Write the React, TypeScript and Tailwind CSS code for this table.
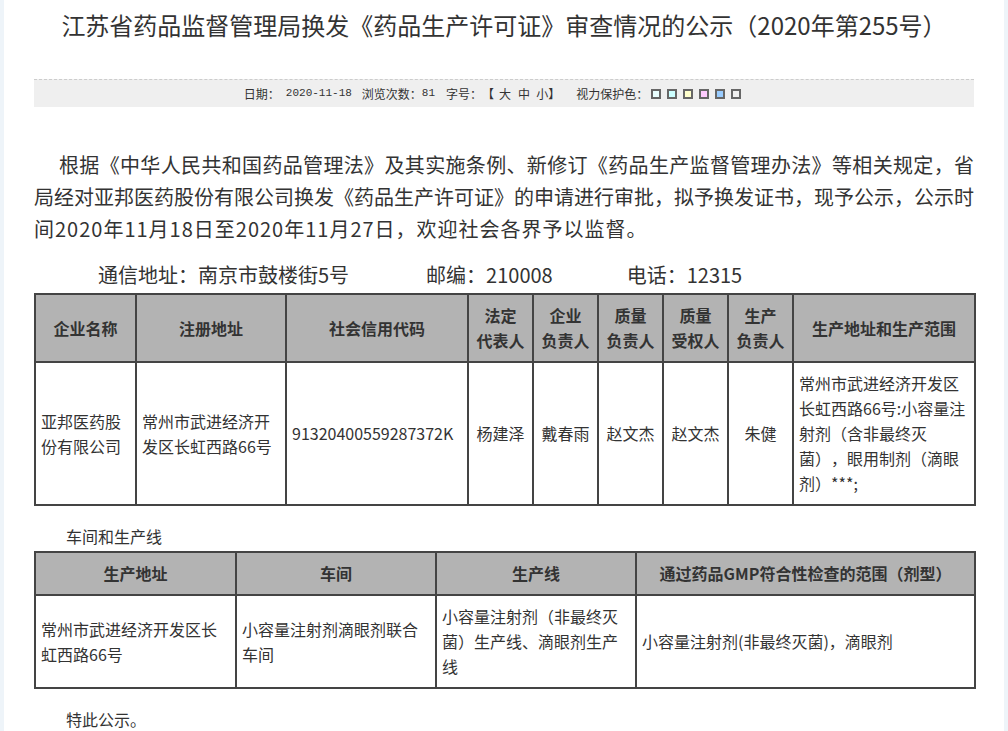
import React from 'react';

const swatches = ['bg-[#eaffff]', 'bg-[#ccffff]', 'bg-[#ffffcc]', 'bg-[#ffccff]', 'bg-[#99ccff]', 'bg-[#efefef]'];

const introLines = [
  '根据《中华人民共和国药品管理法》及其实施条例、新修订《药品生产监督管理办法》等相关规定，省',
  '局经对亚邦医药股份有限公司换发《药品生产许可证》的申请进行审批，拟予换发证书，现予公示，公示时',
];

const mainCols: { head: string[]; width: string; align: string }[] = [
  { head: ['企业名称'], width: 'w-[101px]', align: 'text-left' },
  { head: ['注册地址'], width: 'w-[150px]', align: 'text-left' },
  { head: ['社会信用代码'], width: 'w-[182px]', align: 'text-left' },
  { head: ['法定', '代表人'], width: 'w-[65px]', align: 'text-center' },
  { head: ['企业', '负责人'], width: 'w-[65px]', align: 'text-center' },
  { head: ['质量', '负责人'], width: 'w-[65px]', align: 'text-center' },
  { head: ['质量', '受权人'], width: 'w-[65px]', align: 'text-center' },
  { head: ['生产', '负责人'], width: 'w-[65px]', align: 'text-center' },
  { head: ['生产地址和生产范围'], width: 'w-[182px]', align: 'text-left' },
];

const mainRow = [
  '亚邦医药股份有限公司',
  '常州市武进经济开发区长虹西路66号',
  '91320400559287372K',
  '杨建泽',
  '戴春雨',
  '赵文杰',
  '赵文杰',
  '朱健',
  '常州市武进经济开发区长虹西路66号:小容量注射剂（含非最终灭菌），眼用制剂（滴眼剂）***;',
];

const lineCols = [
  { head: '生产地址', width: 'w-[201px]' },
  { head: '车间', width: 'w-[200px]' },
  { head: '生产线', width: 'w-[200px]' },
  { head: '通过药品GMP符合性检查的范围（剂型）', width: 'w-[339px]' },
];

const lineRow = [
  '常州市武进经济开发区长虹西路66号',
  '小容量注射剂滴眼剂联合车间',
  '小容量注射剂（非最终灭菌）生产线、滴眼剂生产线',
  '小容量注射剂(非最终灭菌)，滴眼剂',
];

const th = 'border-2 border-[#444] bg-[#b3b3b3] px-[5px] py-[8px] text-[16px] leading-[25px] font-bold text-[#333] text-center align-middle';
const td = 'border-2 border-[#444] bg-white px-[5px] py-[8px] text-[16px] leading-[25px] text-[#333] align-middle';

export default function App() {
  return (
    <div className="min-h-screen bg-[#eef4f9] font-['Noto_Sans_CJK_SC',sans-serif] text-[#333] [text-spacing-trim:space-all]">
      <div className="mx-auto w-[1000px] bg-white px-[30px] pb-[20px] pt-[10px]">
        <h1 className="text-center text-[24px] leading-[30px] font-normal text-[#333]">
          江苏省药品监督管理局换发《药品生产许可证》审查情况的公示（2020年第255号）
        </h1>

        {/* info bar */}
        <div className="mt-[39px] flex h-[28px] items-center justify-center border-t border-dashed border-[#ccc] bg-[#efefef] pr-[23px] text-[12px] text-[#333]">
          <span>日期：</span>
          <span className="ml-[6px] font-['Liberation_Mono',monospace] text-[11px]">2020-11-18</span>
          <span className="ml-[10px]">浏览次数：</span>
          <span className="font-['Liberation_Mono',monospace] text-[11px]">81</span>
          <span className="ml-[11px]">字号：</span>
          <span>【</span>
          <span className="ml-[5px]">大</span>
          <span className="ml-[7px]">中</span>
          <span className="ml-[6px]">小</span>
          <span>】</span>
          <span className="ml-[16px]">视力保护色：</span>
          <span className="ml-[3px] flex gap-[6px]">
            {swatches.map((s) => (
              <span key={s} className={`block h-[10px] w-[10px] border-2 border-[#666] ${s}`} />
            ))}
          </span>
        </div>

        {/* intro */}
        <div className="mt-[42px] text-[20px] leading-[32px] text-[#333]">
          {introLines.map((l, i) => (
            <p
              key={i}
              className={`whitespace-nowrap text-justify [text-align-last:justify] ${i === 0 ? 'indent-[25px]' : ''}`}
            >
              {l}
            </p>
          ))}
          <p className="tracking-[1px]">间2020年11月18日至2020年11月27日，欢迎社会各界予以监督。</p>
        </div>

        <div className="mt-[14px] flex text-[20px] leading-[32px] text-[#333]">
          <span className="ml-[64px]">通信地址：南京市鼓楼街5号</span>
          <span className="ml-[77px]">邮编：210008</span>
          <span className="ml-[74px]">电话：12315</span>
        </div>

        <table className="mt-[2px] w-[940px] table-fixed border-collapse">
          <colgroup>
            {mainCols.map((c, i) => (
              <col key={i} className={c.width} />
            ))}
          </colgroup>
          <thead>
            <tr>
              {mainCols.map((c, i) => (
                <th key={i} className={th}>
                  {c.head.map((h) => (
                    <div key={h}>{h}</div>
                  ))}
                </th>
              ))}
            </tr>
          </thead>
          <tbody>
            <tr>
              {mainRow.map((v, i) => (
                <td key={i} className={`${td} ${mainCols[i].align}`}>
                  {v}
                </td>
              ))}
            </tr>
          </tbody>
        </table>

        <p className="mt-[18px] indent-[32px] text-[16px] leading-[24px] text-[#333]">车间和生产线</p>

        <table className="mt-[3px] w-[940px] table-fixed border-collapse">
          <colgroup>
            {lineCols.map((c, i) => (
              <col key={i} className={c.width} />
            ))}
          </colgroup>
          <thead>
            <tr>
              {lineCols.map((c, i) => (
                <th key={i} className={th}>
                  {c.head}
                </th>
              ))}
            </tr>
          </thead>
          <tbody>
            <tr>
              {lineRow.map((v, i) => (
                <td key={i} className={`${td} text-left`}>
                  {v}
                </td>
              ))}
            </tr>
          </tbody>
        </table>

        <p className="mt-[18px] indent-[32px] text-[16px] leading-[24px] text-[#333]">特此公示。</p>
      </div>
    </div>
  );
}
